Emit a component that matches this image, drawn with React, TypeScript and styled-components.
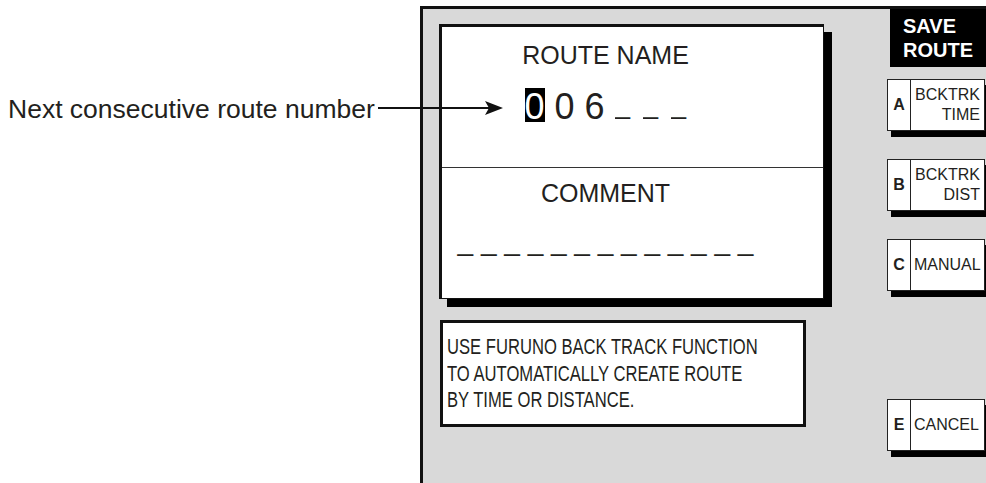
import React from "react";
import styled, { createGlobalStyle } from "styled-components";

const GlobalStyle = createGlobalStyle`
  html, body {
    margin: 0;
    padding: 0;
    background: #fff;
  }
  body {
    font-family: "Liberation Sans", Arial, sans-serif;
    color: #231f20;
  }
`;

const Page = styled.div`
  position: relative;
  width: 986px;
  height: 483px;
  display: flex;
  overflow: hidden;
`;

const Callout = styled.div`
  width: 420px;
  flex-shrink: 0;
  box-sizing: border-box;
  padding: 94px 0 0 8px;
  font-size: 26.5px;
  line-height: 30px;
  white-space: nowrap;
`;

const Pointer = styled.svg`
  position: absolute;
  left: 374px;
  top: 98px;
`;

const Panel = styled.div`
  flex: 1;
  margin-top: 6px;
  background: #d9d9d9;
  border-top: 3px solid #111;
  border-left: 3px solid #111;
  display: flex;
`;

const MainColumn = styled.div`
  display: flex;
  flex-direction: column;
  padding: 15px 0 0 16px;
`;

const NameBox = styled.div`
  width: 385px;
  height: 275px;
  box-sizing: border-box;
  background: #fff;
  border-style: solid;
  border-color: #111;
  border-width: 3px 1px 1px 3px;
  box-shadow: 8px 8px 0 #000;
  display: flex;
  flex-direction: column;
`;

const Section = styled.div<{ $divided?: boolean }>`
  box-sizing: border-box;
  height: ${({ $divided }) => ($divided ? "auto" : "140px")};
  flex: ${({ $divided }) => ($divided ? 1 : "none")};
  border-top: ${({ $divided }) => ($divided ? "1px solid #333" : "none")};
  padding: ${({ $divided }) => ($divided ? "10px 54px 0 0" : "13px 54px 0 0")};
  text-align: center;
`;

const Heading = styled.div`
  font-size: 25px;
  line-height: 30px;
`;

const Digits = styled.div`
  display: flex;
  justify-content: center;
  align-items: flex-start;
  margin-top: 18px;
  height: 34px;
`;

const Digit = styled.span<{ $cursor?: boolean }>`
  width: 20px;
  height: 34px;
  margin-right: 10px;
  font-size: 36px;
  line-height: 38px;
  text-align: center;
  background: ${({ $cursor }) => ($cursor ? "#000" : "transparent")};
  color: ${({ $cursor }) => ($cursor ? "#fff" : "inherit")};
`;

const Blank = styled.span`
  width: 16px;
  margin-right: 12px;
  font-size: 27px;
  line-height: 32px;
  overflow: hidden;

  &:last-child {
    margin-right: 0;
  }
`;

const CommentBlanks = styled.div`
  margin-top: 17px;
  font-size: 28px;
  line-height: 32px;
  white-space: pre;
`;

const InfoBox = styled.div`
  width: 366px;
  height: 107px;
  box-sizing: border-box;
  margin: 21px 0 0 1px;
  background: #fff;
  border: 3px solid #111;
  padding: 11px 0 0 4px;
  font-size: 22px;
  line-height: 26.5px;
  white-space: nowrap;
`;

/* the manual sets this note in a condensed face */
const Condensed = styled.div`
  transform: scaleX(0.755);
  transform-origin: left top;
`;

const KeyColumn = styled.div`
  margin-left: auto;
  width: 99px;
  display: flex;
  flex-direction: column;
  gap: 28px;
`;

const SaveTitle = styled.div`
  align-self: flex-end;
  width: 96px;
  height: 58px;
  box-sizing: border-box;
  margin-bottom: -16px;
  padding: 5px 0 0 13px;
  background: #000;
  color: #fff;
  font-weight: bold;
  font-size: 20px;
  line-height: 24px;
`;

const SoftKey = styled.div<{ $empty?: boolean }>`
  width: 98px;
  height: 52px;
  box-sizing: border-box;
  display: flex;
  visibility: ${({ $empty }) => ($empty ? "hidden" : "visible")};
  background: #fff;
  border: 1.5px solid #222;
  box-shadow: 4px 6px 0 #000;
`;

const KeyLetter = styled.div`
  width: 22px;
  border-right: 1px solid #222;
  display: flex;
  align-items: center;
  justify-content: center;
  font-weight: bold;
  font-size: 16px;
`;

const KeyLabel = styled.div<{ $stack?: boolean }>`
  flex: 1;
  display: flex;
  flex-direction: column;
  justify-content: ${({ $stack }) => ($stack ? "flex-start" : "center")};
  padding: ${({ $stack }) => ($stack ? "5px 4px 0 0" : "0 0 0 3px")};
  text-align: ${({ $stack }) => ($stack ? "right" : "left")};
  font-size: 16px;
  line-height: 20px;
`;

const keys = [
  { key: "A", lines: ["BCKTRK", "TIME"] },
  { key: "B", lines: ["BCKTRK", "DIST"] },
  { key: "C", lines: ["MANUAL"] },
  { key: "D", lines: [] as string[] },
  { key: "E", lines: ["CANCEL"] },
];

const App: React.FC = () => {
  return (
    <>
      <GlobalStyle />
      <Page>
        <Callout>Next consecutive route number</Callout>

        <Panel>
          <MainColumn>
            <NameBox>
              <Section>
                <Heading>ROUTE NAME</Heading>
                <Digits>
                  <Digit $cursor>0</Digit>
                  <Digit>0</Digit>
                  <Digit>6</Digit>
                  <Blank>_</Blank>
                  <Blank>_</Blank>
                  <Blank>_</Blank>
                </Digits>
              </Section>
              <Section $divided>
                <Heading>COMMENT</Heading>
                <CommentBlanks>{Array(13).fill("_").join(" ")}</CommentBlanks>
              </Section>
            </NameBox>

            <InfoBox>
              <Condensed>
                USE FURUNO BACK TRACK FUNCTION
                <br />
                TO AUTOMATICALLY CREATE ROUTE
                <br />
                BY TIME OR DISTANCE.
              </Condensed>
            </InfoBox>
          </MainColumn>

          <KeyColumn>
            <SaveTitle>
              SAVE
              <br />
              ROUTE
            </SaveTitle>
            {keys.map(({ key, lines }) => (
              <SoftKey key={key} $empty={lines.length === 0}>
                <KeyLetter>{key}</KeyLetter>
                <KeyLabel $stack={lines.length > 1}>
                  <span>
                    {lines.map((line, i) => (
                      <React.Fragment key={line}>
                        {i > 0 && <br />}
                        {line}
                      </React.Fragment>
                    ))}
                  </span>
                </KeyLabel>
              </SoftKey>
            ))}
          </KeyColumn>
        </Panel>

        <Pointer width="132" height="20" viewBox="0 0 132 20">
          <line x1="4" y1="10" x2="118" y2="10" stroke="#111" strokeWidth="2" />
          <polygon points="129,10 111,3 115,10 111,17" fill="#111" />
        </Pointer>
      </Page>
    </>
  );
};

export default App;
